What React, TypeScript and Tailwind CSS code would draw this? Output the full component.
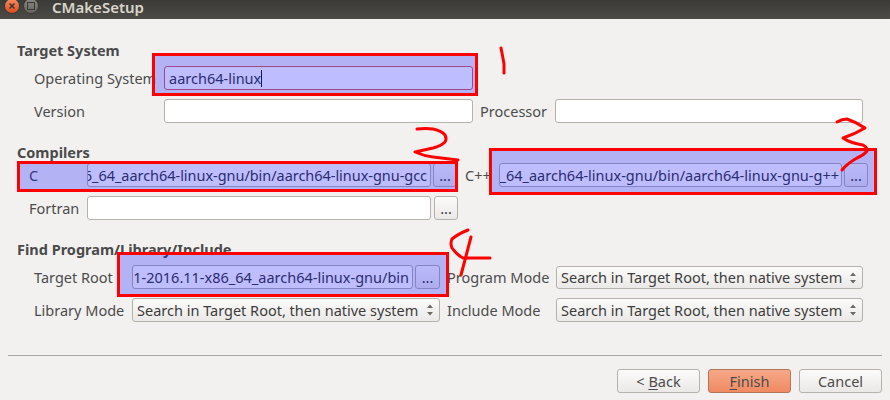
import React from "react";

const font = "font-['Noto_Sans','Open_Sans',sans-serif]";

function Label({ w, children }: { w: string; children: React.ReactNode }) {
  return <div className={`${w} shrink-0 whitespace-nowrap`}>{children}</div>;
}

function Input({
  className,
  value,
  end,
  focus,
  textClass = "",
}: {
  className: string;
  value?: string;
  end?: boolean;
  focus?: boolean;
  textClass?: string;
}) {
  return (
    <div
      className={`${className} h-6 shrink-0 bg-white border ${focus ? "border-[#d8635f]" : "border-[#b5b2ac]"} rounded-[3px] overflow-hidden flex items-center pl-[4px] whitespace-nowrap text-[#3c3c3c] ${end ? "justify-end" : ""}`}
    >
      <span className={textClass}>{value}</span>
      {focus ? <span className="w-px h-[17px] bg-[#1c1c1c]" /> : null}
    </div>
  );
}

function Dots({ className = "" }: { className?: string }) {
  return (
    <div
      className={`${className} h-6 shrink-0 rounded-[3px] border border-[#b5b2ac] bg-gradient-to-b from-[#fbfbfa] to-[#ebe9e7] flex items-center justify-center text-[#3c3c3c] leading-none`}
    >
      ...
    </div>
  );
}

function Combo({ className }: { className: string }) {
  return (
    <div
      className={`${className} shrink-0 rounded-[3px] border border-[#b5b2ac] bg-gradient-to-b from-[#fbfbfa] to-[#ebe9e7] flex items-center justify-between pl-[4px] pr-[5px] whitespace-nowrap text-[#3c3c3c]`}
    >
      <span>Search in Target Root, then native system</span>
      <svg width="8" height="14" viewBox="0 0 8 14" className="shrink-0">
        <path d="M4 1.5 L7 5 H1 Z" fill="#6a6a66" />
        <path d="M1 9 H7 L4 12.5 Z" fill="#6a6a66" />
      </svg>
    </div>
  );
}

function Btn({ className, children }: { className: string; children: React.ReactNode }) {
  return (
    <div className={`${className} w-[83px] h-6 rounded-[3px] border flex items-center justify-center`}>{children}</div>
  );
}

function Mark({ className }: { className: string }) {
  return <div className={`absolute border-[3px] border-[#ff0000] bg-[rgba(0,0,255,0.26)] ${className}`} />;
}

export default function App() {
  return (
    <div className={`${font} relative w-[890px] h-[400px] overflow-hidden bg-[#f2f1f0] text-[14.5px] leading-none text-[#4c4c4c]`}>
      <div className="h-[19px] bg-gradient-to-b from-[#3b3a36] to-[#4d4b46] flex items-start pl-[4px]">
        <div className="w-[16px] h-[16px] -mt-[2px] shrink-0 rounded-full bg-gradient-to-b from-[#f58b5f] to-[#dc4a1d] border border-[#3b3a36] flex items-center justify-center">
          <svg width="8" height="8" viewBox="0 0 8 8">
            <path d="M1.5 1.5 L6.5 6.5 M6.5 1.5 L1.5 6.5" stroke="#41332b" strokeWidth="1.5" />
          </svg>
        </div>
        <div className="ml-[3px] w-[16px] h-[16px] -mt-[2px] shrink-0 rounded-full bg-gradient-to-b from-[#8a8882] to-[#66645e] border border-[#3b3a36] flex items-center justify-center">
          <div className="w-[8px] h-[8px] border border-[#3a3934]" />
        </div>
        <div className="ml-[13px] text-[15px] font-semibold text-[#d9d5cb]">CMakeSetup</div>
      </div>

      <div className="pl-[17px] pr-[8px]">
        <div className="mt-[24px] h-[14px] font-bold text-[#4a4a4a] flex items-center">Target System</div>

        <div className="mt-[9px] flex items-center pl-[17px]">
          <Label w="w-[130px]">Operating System</Label>
          <Input className="w-[309px]" value="aarch64-linux" focus />
        </div>

        <div className="mt-[9px] flex items-center pl-[17px]">
          <Label w="w-[130px]">Version</Label>
          <Input className="w-[309px]" />
          <div className="ml-[7px] w-[75px]">Processor</div>
          <Input className="w-[308px]" />
        </div>

        <div className="mt-[22px] h-[14px] font-bold text-[#4a4a4a] flex items-center">Compilers</div>

        <div className="mt-[4px] flex items-center pl-[12px]">
          <Label w="w-[58px]">C</Label>
          <Input className="w-[344px] pr-[3px]" value="6_64_aarch64-linux-gnu/bin/aarch64-linux-gnu-gcc" end textClass="tracking-[-0.04px]" />
          <Dots className="ml-[2px] w-6" />
          <div className="ml-[8px] w-[34px]">C++</div>
          <Input className="w-[343px] pr-[2px]" value="_64_aarch64-linux-gnu/bin/aarch64-linux-gnu-g++" end />
          <Dots className="ml-[2px] w-6" />
        </div>

        <div className="mt-[9px] flex items-center pl-[12px]">
          <Label w="w-[58px]">Fortran</Label>
          <Input className="w-[344px]" />
          <Dots className="ml-[3px] w-6" />
        </div>

        <div className="mt-[22px] h-[14px] font-bold text-[#4a4a4a] flex items-center">Find Program/Library/Include</div>

        <div className="mt-[9px] flex items-start pl-[17px]">
          <Label w="w-[98px] self-center">Target Root</Label>
          <Input className="w-[281px] pr-[3px]" value="1-2016.11-x86_64_aarch64-linux-gnu/bin" end />
          <Dots className="ml-[2px] w-[25px]" />
          <div className="ml-[7px] w-[109px] self-center">Program Mode</div>
          <Combo className="w-[307px] h-[23px] mt-px" />
        </div>

        <div className="mt-[9px] flex items-center pl-[17px]">
          <Label w="w-[98px]">Library Mode</Label>
          <Combo className="w-[308px] h-6" />
          <div className="ml-[7px] w-[109px]">Include Mode</div>
          <Combo className="w-[307px] h-6" />
        </div>

        <div className="-ml-[9px] mt-[33px] w-[874px] h-px bg-[#aaa8a4]" />

        <div className="mt-[13px] flex justify-end gap-2 w-[865px]">
          <Btn className="border-[#b5b2ac] bg-gradient-to-b from-[#fbfbfa] to-[#ebe9e7]">
            <span>&lt; <span className="underline underline-offset-2">B</span>ack</span>
          </Btn>
          <Btn className="border-[#b0765a] bg-gradient-to-b from-[#f6a888] to-[#f08a63]">
            <span><span className="underline underline-offset-2">F</span>inish</span>
          </Btn>
          <Btn className="border-[#b5b2ac] bg-gradient-to-b from-[#fbfbfa] to-[#ebe9e7]">
            <span>Cancel</span>
          </Btn>
        </div>
      </div>

      {/* Hand-drawn annotation overlays */}
      <Mark className="left-[152px] top-[53px] w-[326px] h-[43px]" />
      <Mark className="left-[17px] top-[161px] w-[441px] h-[31px]" />
      <Mark className="left-[489px] top-[148px] w-[388px] h-[47px]" />
      <Mark className="left-[117px] top-[252px] w-[332px] h-[45px]" />
      <svg className="absolute inset-0 pointer-events-none" width="890" height="400" fill="none" stroke="#ff0000" strokeWidth="3" strokeLinecap="round" strokeLinejoin="round">
        <path d="M501 48 Q503 58 504 64 L504 73" />
        <path d="M417 129 Q426 128 433 129 Q442 131 445 135 Q447 139 445 142 Q441 146 433 148 L415 152 Q424 156 433 157 L458 160" />
        <path d="M837 122 Q842 119 847 119 Q856 122 865 128 Q855 134 843 138 Q850 143 863 145 Q868 148 867 151 Q864 155 857 158 Q848 163 842 170" />
        <path d="M468 230 Q458 234 452 239 Q450 244 452 248 Q457 255 463 258 L490 258" />
        <path d="M471 237 L461 275" />
      </svg>
    </div>
  );
}
